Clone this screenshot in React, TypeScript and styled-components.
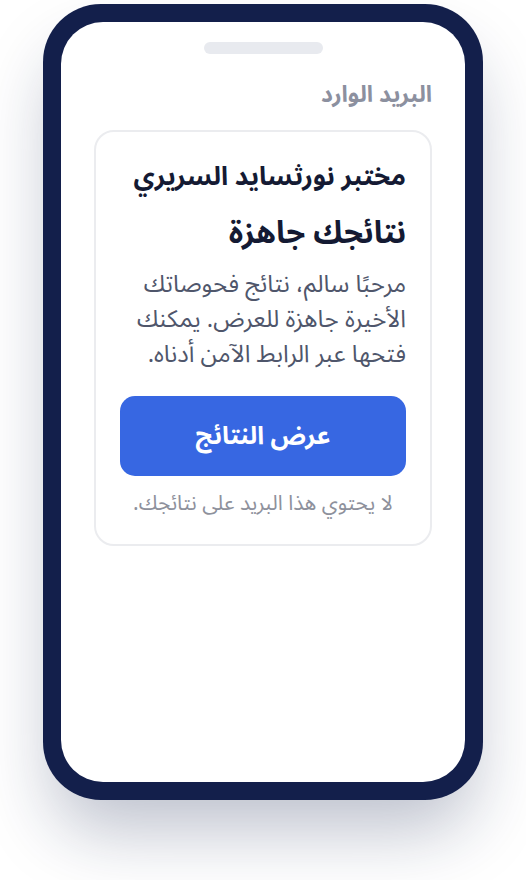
import React from "react";
import styled, { createGlobalStyle } from "styled-components";

const Global = createGlobalStyle`
  html, body { margin: 0; padding: 0; background: #ffffff; }
  body { font-family: "Noto Sans Arabic", "Noto Sans", "DejaVu Sans", sans-serif; }
  * { box-sizing: border-box; }
`;

const Page = styled.div`
  width: 526px;
  height: 880px;
  display: flex;
  justify-content: center;
  padding-top: 4px;
`;

const Phone = styled.div`
  width: 440px;
  height: 796px;
  background: #131f4b;
  border-radius: 58px;
  padding: 18px;
  box-shadow: 0 40px 70px -10px rgba(19, 31, 75, 0.28);
`;

const Screen = styled.div`
  width: 100%;
  height: 100%;
  background: #ffffff;
  border-radius: 42px;
  padding: 20px 33px 0;
  display: flex;
  flex-direction: column;
  align-items: stretch;
`;

const Notch = styled.div`
  align-self: center;
  width: 119px;
  height: 12px;
  border-radius: 6px;
  background: #e8eaef;
`;

const Inbox = styled.div`
  direction: rtl;
  margin-top: 26px;
  font-size: 23px;
  font-weight: 700;
  color: #8c909f;
  line-height: 30px;
`;

const Card = styled.div`
  direction: rtl;
  margin-top: 20px;
  border: 2px solid #ebecef;
  border-radius: 20px;
  padding: 25px 24px 26px;
  display: flex;
  flex-direction: column;
`;

const Lab = styled.div`
  font-size: 26px;
  font-weight: 700;
  color: #141a33;
  line-height: 40px;
`;

const Title = styled.div`
  margin-top: 12px;
  font-size: 31px;
  font-weight: 700;
  color: #141a33;
  line-height: 48px;
`;

const Body = styled.p`
  margin: 10px 0 0;
  font-size: 24px;
  font-weight: 400;
  color: #4f566b;
  line-height: 35px;
`;

const Button = styled.button`
  margin-top: 24px;
  height: 80px;
  border: none;
  border-radius: 15px;
  background: #3767e2;
  color: #ffffff;
  font-family: inherit;
  font-size: 25px;
  font-weight: 700;
  direction: rtl;
  cursor: pointer;
`;

const Note = styled.div`
  margin-top: 12px;
  text-align: center;
  font-size: 21px;
  color: #8e919c;
  line-height: 30px;
`;

export default function App() {
  return (
    <>
      <Global />
      <Page>
        <Phone>
          <Screen>
            <Notch />
            <Inbox>البريد الوارد</Inbox>
            <Card>
              <Lab>مختبر نورثسايد السريري</Lab>
              <Title>نتائجك جاهزة</Title>
              <Body>
                مرحبًا سالم، نتائج فحوصاتك الأخيرة جاهزة للعرض. يمكنك فتحها عبر
                الرابط الآمن أدناه.
              </Body>
              <Button>عرض النتائج</Button>
              <Note>لا يحتوي هذا البريد على نتائجك.</Note>
            </Card>
          </Screen>
        </Phone>
      </Page>
    </>
  );
}
